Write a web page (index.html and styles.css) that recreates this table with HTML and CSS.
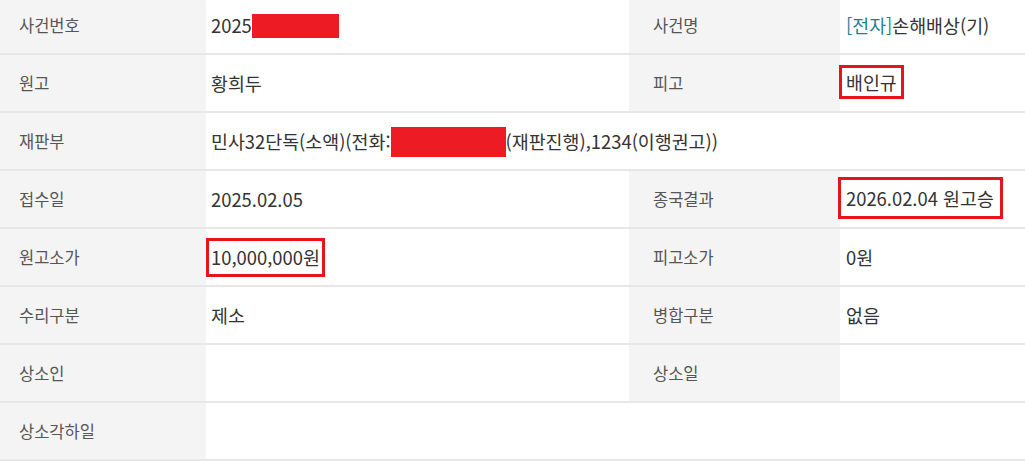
FILE: index.html
```html
<!DOCTYPE html>
<html lang="ko">
<head>
<meta charset="utf-8">
<link rel="stylesheet" href="styles.css">
</head>
<body>
<div class="table">
  <div class="row">
    <div class="cell label">사건번호</div>
    <div class="cell value">2025<span class="redact redact-a"></span></div>
    <div class="cell label label-r">사건명</div>
    <div class="cell value value-r"><span class="tag">[전자]</span>손해배상(기)</div>
  </div>
  <div class="row">
    <div class="cell label">원고</div>
    <div class="cell value">황희두</div>
    <div class="cell label label-r">피고</div>
    <div class="cell value value-r"><span class="mark mark-name">배인규</span></div>
  </div>
  <div class="row">
    <div class="cell label">재판부</div>
    <div class="cell value span3">민사32단독(소액)(전화:<span class="redact redact-b"></span>(재판진행),1234(이행권고))</div>
  </div>
  <div class="row">
    <div class="cell label">접수일</div>
    <div class="cell value">2025.02.05</div>
    <div class="cell label label-r">종국결과</div>
    <div class="cell value value-r"><span class="mark mark-result">2026.02.04 원고승</span></div>
  </div>
  <div class="row">
    <div class="cell label">원고소가</div>
    <div class="cell value"><span class="mark mark-amount">10,000,000원</span></div>
    <div class="cell label label-r">피고소가</div>
    <div class="cell value value-r">0원</div>
  </div>
  <div class="row">
    <div class="cell label">수리구분</div>
    <div class="cell value">제소</div>
    <div class="cell label label-r">병합구분</div>
    <div class="cell value value-r">없음</div>
  </div>
  <div class="row">
    <div class="cell label">상소인</div>
    <div class="cell value"></div>
    <div class="cell label label-r">상소일</div>
    <div class="cell value value-r"></div>
  </div>
  <div class="row">
    <div class="cell label">상소각하일</div>
    <div class="cell value span3"></div>
  </div>
</div>
</body>
</html>
```

FILE: styles.css
```css
html, body {
  margin: 0;
  padding: 0;
  background: #ffffff;
}
body {
  font-family: "Noto Sans CJK KR", "Noto Sans", sans-serif;
  font-size: 18.4px;
  color: #333333;
  overflow: hidden;
}
.table {
  margin-top: -3px;
  width: 1025px;
}
.row {
  display: grid;
  grid-template-columns: 206px 423px 211px 1fr;
  height: 56px;
  border-bottom: 2px solid #e7e7e7;
}
.cell {
  display: flex;
  align-items: center;
  white-space: nowrap;
}
.label {
  background: #f4f4f4;
  color: #555555;
  font-size: 16.5px;
  padding-left: 19px;
}
.label-r {
  padding-left: 24px;
}
.value {
  padding-left: 5px;
}
.value-r {
  padding-left: 6px;
}
.span3 {
  grid-column: 2 / 5;
}
.tag {
  color: #1f7f99;
}
.redact {
  display: inline-block;
  background: #ed1c24;
}
.redact-a {
  width: 87px;
  height: 24px;
  margin-top: 1px;
}
.redact-b {
  width: 115px;
  height: 30px;
  margin-top: 1px;
}
.mark {
  display: inline-flex;
  align-items: center;
  border: 3px solid #e8141c;
  box-sizing: border-box;
}
.mark-name {
  width: 65px;
  height: 34px;
  margin-left: -7px;
  padding-left: 4px;
  margin-top: -2px;
}
.mark-result {
  width: 165px;
  height: 42px;
  margin-left: -8px;
  padding-left: 5px;
  margin-top: -2px;
}
.mark-amount {
  width: 119px;
  height: 39px;
  margin-left: -5px;
  padding-left: 2px;
}
```
